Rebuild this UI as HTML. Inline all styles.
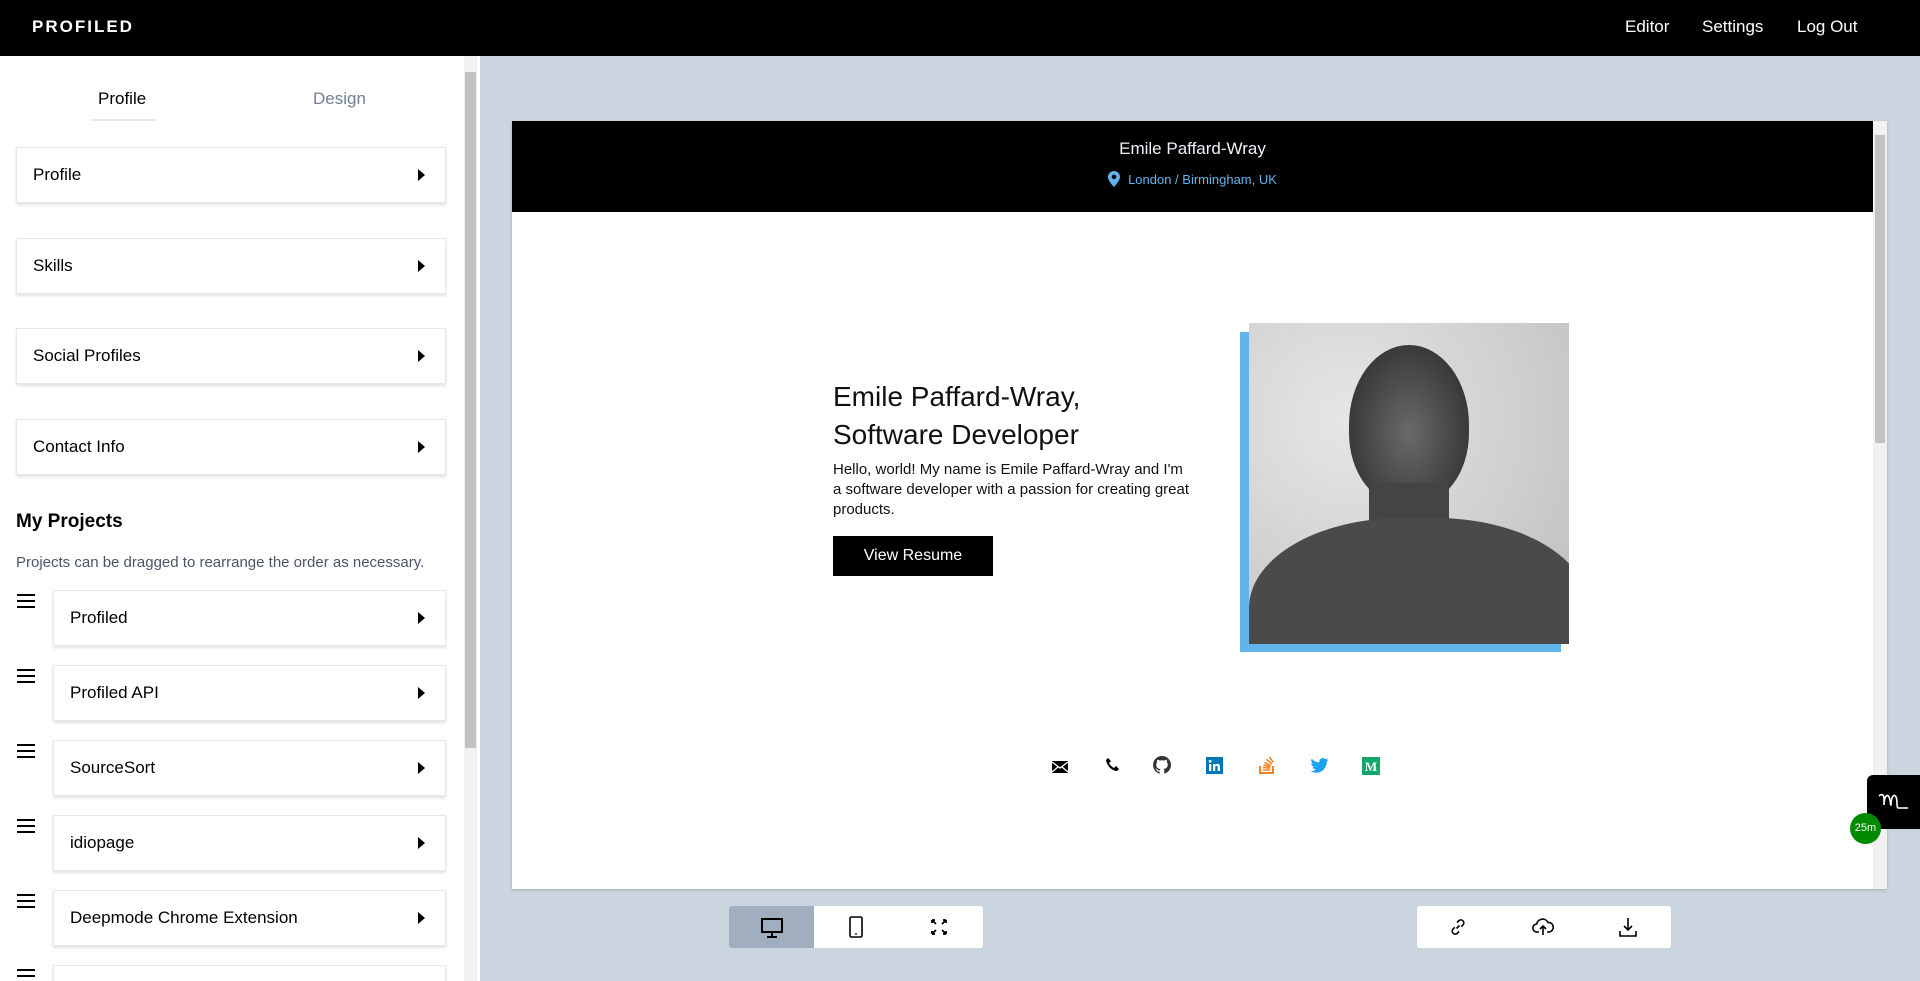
<!DOCTYPE html>
<html><head><meta charset="utf-8"><style>
*{box-sizing:border-box;margin:0;padding:0}
html,body{width:1920px;height:981px;overflow:hidden}
body{font-family:"Liberation Sans",sans-serif;background:#cbd5e0;color:#000}
#w{position:relative;width:1920px;height:981px;overflow:hidden}
.top{position:absolute;left:0;top:0;width:1920px;height:56px;background:#000;color:#fff}
.logo{position:absolute;left:32px;top:17px;font-size:17px;font-weight:bold;letter-spacing:2px}
.nav{position:absolute;top:17px;font-size:17px}
.side{position:absolute;left:0;top:56px;width:480px;height:925px;background:#fff}
.sb{position:absolute;left:464px;top:56px;width:13px;height:925px;background:#f1f1f1}
.thumb{position:absolute;left:465px;top:72px;width:11px;height:676px;background:#c1c1c1}
.tab{position:absolute;top:89px;font-size:17px}
.card{position:absolute;left:16px;width:430px;height:56px;background:#fff;border:1px solid #e2e8f0;box-shadow:0 2px 3px rgba(0,0,0,.12);font-size:17px}
.card span{position:absolute;left:16px;top:17px}
.card i{position:absolute;right:20px;top:21px;width:0;height:0;border-left:7px solid #000;border-top:6px solid transparent;border-bottom:6px solid transparent}
.pc{left:53px;width:393px}
.ham{position:absolute;left:17px;width:18px}
.ham b{display:block;height:2px;background:#000;margin-bottom:4px}
.frame{position:absolute;left:512px;top:121px;width:1375px;height:768px;background:#fff;box-shadow:0 1px 3px rgba(0,0,0,.2)}
.fsb{position:absolute;right:0;top:0;width:14px;height:768px;background:#f1f1f1}
.fth{position:absolute;right:2px;top:14px;width:10px;height:308px;background:#c1c1c1}
.hdr{position:absolute;left:0;top:0;width:1361px;height:91px;background:#000;text-align:center}
.ic{position:absolute}
.tb{position:absolute;top:906px;height:42px;width:254px;background:#fff;border-radius:3px}
</style></head><body><div id="w">
<div class="top"><div class="logo">PROFILED</div>
<div class="nav" style="left:1625px">Editor</div><div class="nav" style="left:1702px">Settings</div><div class="nav" style="left:1797px">Log Out</div></div>

<div class="side">
<div class="tab" style="left:98px;top:33px">Profile</div>
<div style="position:absolute;left:91px;top:63px;width:65px;height:2px;background:#e2e8f0"></div>
<div class="tab" style="left:313px;top:33px;color:#718096">Design</div>
</div>
<div class="card" style="top:147px"><span>Profile</span><i></i></div>
<div class="card" style="top:238px"><span>Skills</span><i></i></div>
<div class="card" style="top:328px"><span>Social Profiles</span><i></i></div>
<div class="card" style="top:419px"><span>Contact Info</span><i></i></div>
<div style="position:absolute;left:16px;top:511px;font-size:19px;font-weight:bold">My Projects</div>
<div style="position:absolute;left:16px;top:554px;font-size:15px;color:#4a5568">Projects can be dragged to rearrange the order as necessary.</div>
<div class="ham" style="top:594px"><b></b><b></b><b></b></div><div class="card pc" style="top:590px"><span>Profiled</span><i></i></div>
<div class="ham" style="top:669px"><b></b><b></b><b></b></div><div class="card pc" style="top:665px"><span>Profiled API</span><i></i></div>
<div class="ham" style="top:744px"><b></b><b></b><b></b></div><div class="card pc" style="top:740px"><span>SourceSort</span><i></i></div>
<div class="ham" style="top:819px"><b></b><b></b><b></b></div><div class="card pc" style="top:815px"><span>idiopage</span><i></i></div>
<div class="ham" style="top:894px"><b></b><b></b><b></b></div><div class="card pc" style="top:890px"><span>Deepmode Chrome Extension</span><i></i></div>
<div class="ham" style="top:969px"><b></b><b></b><b></b></div><div class="card pc" style="top:965px"></div>
<div class="sb"></div><div class="thumb"></div>

<div class="frame">
<div class="hdr">
<div style="position:absolute;left:0;width:100%;top:18px;font-size:17px;color:#edf2f7">Emile Paffard-Wray</div>
<div style="position:absolute;left:0;width:100%;top:50px;font-size:13px;color:#63b3ed"><svg width="12" height="16" viewBox="0 0 12 16" style="vertical-align:-3px;margin-right:8px"><path d="M6 0C2.7 0 0 2.6 0 5.9 0 10 6 16 6 16s6-6 6-10.1C12 2.6 9.3 0 6 0zm0 8.2a2.3 2.3 0 110-4.6 2.3 2.3 0 010 4.6z" fill="#63b3ed"/></svg>London / Birmingham, UK</div>
</div>
<div style="position:absolute;left:321px;top:257px;font-size:28px;line-height:38px;color:#111">Emile Paffard-Wray,<br>Software Developer</div>
<div style="position:absolute;left:321px;top:339px;width:360px;font-size:15px;line-height:20px;color:#111">Hello, world! My name is Emile Paffard-Wray and I'm a software developer with a passion for creating great products.</div>
<div style="position:absolute;left:321px;top:415px;width:160px;height:40px;background:#000;color:#fff;font-size:16px;text-align:center;line-height:40px">View Resume</div>
<div style="position:absolute;left:728px;top:211px;width:321px;height:320px;background:#63b3ed"></div>
<div style="position:absolute;left:737px;top:202px;width:320px;height:321px;overflow:hidden;background:radial-gradient(ellipse at 30% 30%,#e6e6e6,#bdbdbd)">
<div style="position:absolute;left:100px;top:22px;width:120px;height:160px;border-radius:50% 50% 45% 45%;background:radial-gradient(ellipse at 50% 55%,#6a6a6a,#3a3a3a 70%,#222)"></div>
<div style="position:absolute;left:120px;top:160px;width:80px;height:50px;background:#444"></div>
<div style="position:absolute;left:0;top:195px;width:340px;height:200px;border-radius:45% 45% 0 0;background:#4a4a4a"></div>
</div>
<div class="ic" style="left:540px;top:639px"><svg width="16" height="12" viewBox="0 0 16 12"><rect width="16" height="12" fill="#000"/><path d="M0 1l8 6 8-6M0 11l6-5M16 11l-6-5" stroke="#fff" stroke-width="1.3" fill="none"/></svg></div>
<div class="ic" style="left:593px;top:636px"><svg width="16" height="16" viewBox="0 0 16 16"><path d="M3 1l3 3-2 2c1 2 3 4 5 5l2-2 3 3-2 2C7 14 2 9 1 3z" fill="#000"/></svg></div>
<div class="ic" style="left:641px;top:635px"><svg width="18" height="18" viewBox="0 0 16 16"><path fill="#333" d="M8 0C3.6 0 0 3.6 0 8c0 3.5 2.3 6.5 5.5 7.6.4.1.5-.2.5-.4v-1.4c-2.2.5-2.7-1-2.7-1-.4-.9-.9-1.2-.9-1.2-.7-.5.1-.5.1-.5.8.1 1.2.8 1.2.8.7 1.3 1.900.9 2.3.7.1-.5.3-.9.5-1.1-1.8-.2-3.6-.9-3.6-4 0-.9.3-1.6.8-2.1-.1-.2-.4-1 .1-2.1 0 0 .7-.2 2.2.8.6-.2 1.3-.3 2-.3s1.4.1 2 .3c1.5-1 2.2-.8 2.2-.8.4 1.1.2 1.9.1 2.1.5.6.8 1.300.8 2.1 0 3.1-1.900 3.7-3.600 3.900.3.3.5.8.5 1.5v2.2c0 .2.1.5.6.4C13.7 14.5 16 11.5 16 8c0-4.4-3.6-8-8-8z"/></svg></div>
<div class="ic" style="left:694px;top:636px"><svg width="17" height="17" viewBox="0 0 17 17"><rect width="17" height="17" fill="#0077b5"/><rect x="3" y="7" width="2.3" height="7" fill="#fff"/><circle cx="4.15" cy="4.3" r="1.4" fill="#fff"/><path d="M7 7h2.2v1c.5-.8 1.3-1.200 2.3-1.200 1.6 0 2.5 1 2.5 3V14h-2.3v-3.8c0-1-.4-1.5-1.2-1.5s-1.300.6-1.300 1.500V14H7z" fill="#fff"/></svg></div>
<div class="ic" style="left:747px;top:635px"><svg width="16" height="18" viewBox="0 0 16 18"><path d="M1 10v7h13v-7" stroke="#f48024" stroke-width="2" fill="none"/><path d="M4 14h7M4 11.5l7 .6M4.5 9l6.8 1.6M5.5 6.5l6.3 3M7.5 3.5l5.5 4.3M10.5 1l3.8 5.3" stroke="#f48024" stroke-width="1.6"/></svg></div>
<div class="ic" style="left:798px;top:637px"><svg width="19" height="15" viewBox="0 0 24 20"><path fill="#1da1f2" d="M24 2.4c-.9.4-1.8.7-2.8.8 1-.6 1.800-1.600 2.200-2.700-1 .6-2 1-3.100 1.200C19.3.7 18 0 16.6 0c-2.700 0-4.900 2.200-4.900 4.900 0 .4 0 .8.1 1.100C7.700 5.800 4.100 3.900 1.700.9c-.4.7-.7 1.600-.7 2.500 0 1.700.9 3.200 2.200 4.100-.8 0-1.600-.2-2.200-.6v.1c0 2.400 1.700 4.400 3.900 4.800-.4.1-.8.2-1.300.2-.3 0-.6 0-.9-.1.6 2 2.400 3.400 4.600 3.400-1.700 1.300-3.800 2.100-6.100 2.100H0c2.200 1.400 4.800 2.200 7.500 2.200 9.100 0 14-7.500 14-14v-.6c1-.7 1.800-1.600 2.500-2.600z"/></svg></div>
<div class="ic" style="left:850px;top:636px"><svg width="18" height="18" viewBox="0 0 18 18"><rect width="18" height="18" fill="#12a86b"/><text x="9" y="14" text-anchor="middle" font-family="Liberation Serif,serif" font-weight="bold" font-size="13" fill="#fff">M</text></svg></div>
<div class="fsb"></div><div class="fth"></div>
</div>

<div class="tb" style="left:729px;overflow:hidden">
<div style="position:absolute;left:0;top:0;width:85px;height:42px;background:#a0aec0"></div>
<svg style="position:absolute;left:32px;top:12px" width="22" height="20" viewBox="0 0 22 20"><rect x="1" y="1" width="20" height="13" fill="none" stroke="#000" stroke-width="2"/><path d="M11 14v4M6 19h10" stroke="#000" stroke-width="2"/></svg>
<svg style="position:absolute;left:119px;top:10px" width="16" height="22" viewBox="0 0 16 22"><rect x="2" y="1" width="12" height="20" rx="1.5" fill="none" stroke="#000" stroke-width="1.6"/><circle cx="8" cy="18" r=".9"/></svg>
<svg style="position:absolute;left:202px;top:13px" width="16" height="16" viewBox="0 0 16 16" stroke="#000" stroke-width="1.8" fill="none"><path d="M1 1l4 4M1 1v3M1 1h3M15 1l-4 4M15 1v3M15 1h-3M1 15l4-4M1 15v-3M1 15h3M15 15l-4-4M15 15v-3M15 15h-3"/></svg>
</div>
<div class="tb" style="left:1417px">
<svg style="position:absolute;left:32px;top:12px" width="18" height="18" viewBox="0 0 18 18" stroke="#000" stroke-width="1.6" fill="none"><path d="M7.5 10.5l3-3M8 4.5l2-2a3 3 0 014.2 4.2l-2 2M10 13.5l-2 2a3 3 0 01-4.2-4.2l2-2"/></svg>
<svg style="position:absolute;left:115px;top:12px" width="22" height="18" viewBox="0 0 22 18" stroke="#000" stroke-width="1.6" fill="none"><path d="M7 14H5a4 4 0 01-.3-8A6 6 0 0116 4.5 4.5 4.5 0 0117 14h-2M11 17V8M8 11l3-3 3 3"/></svg>
<svg style="position:absolute;left:202px;top:11px" width="18" height="20" viewBox="0 0 18 20" stroke="#000" stroke-width="1.6" fill="none"><path d="M9 1v12M5 9l4 4 4-4M1 14v5h16v-5"/></svg>
</div>

<div style="position:absolute;left:1867px;top:775px;width:60px;height:54px;background:#000;border-radius:6px 0 0 6px"><svg style="position:absolute;left:10px;top:15px" width="34" height="22" viewBox="0 0 34 22"><path d="M2 6c3-3 5-1 5 3v6c0-8 3-12 5-8s1 8 2 8c0-8 3-12 5-8s0 10 2 11h10" stroke="#fff" stroke-width="1.6" fill="none"/></svg></div>
<div style="position:absolute;left:1850px;top:813px;width:31px;height:31px;border-radius:50%;background:#008a00;color:#fff;font-size:11px;text-align:center;line-height:31px">25m</div>
</div></body></html>
